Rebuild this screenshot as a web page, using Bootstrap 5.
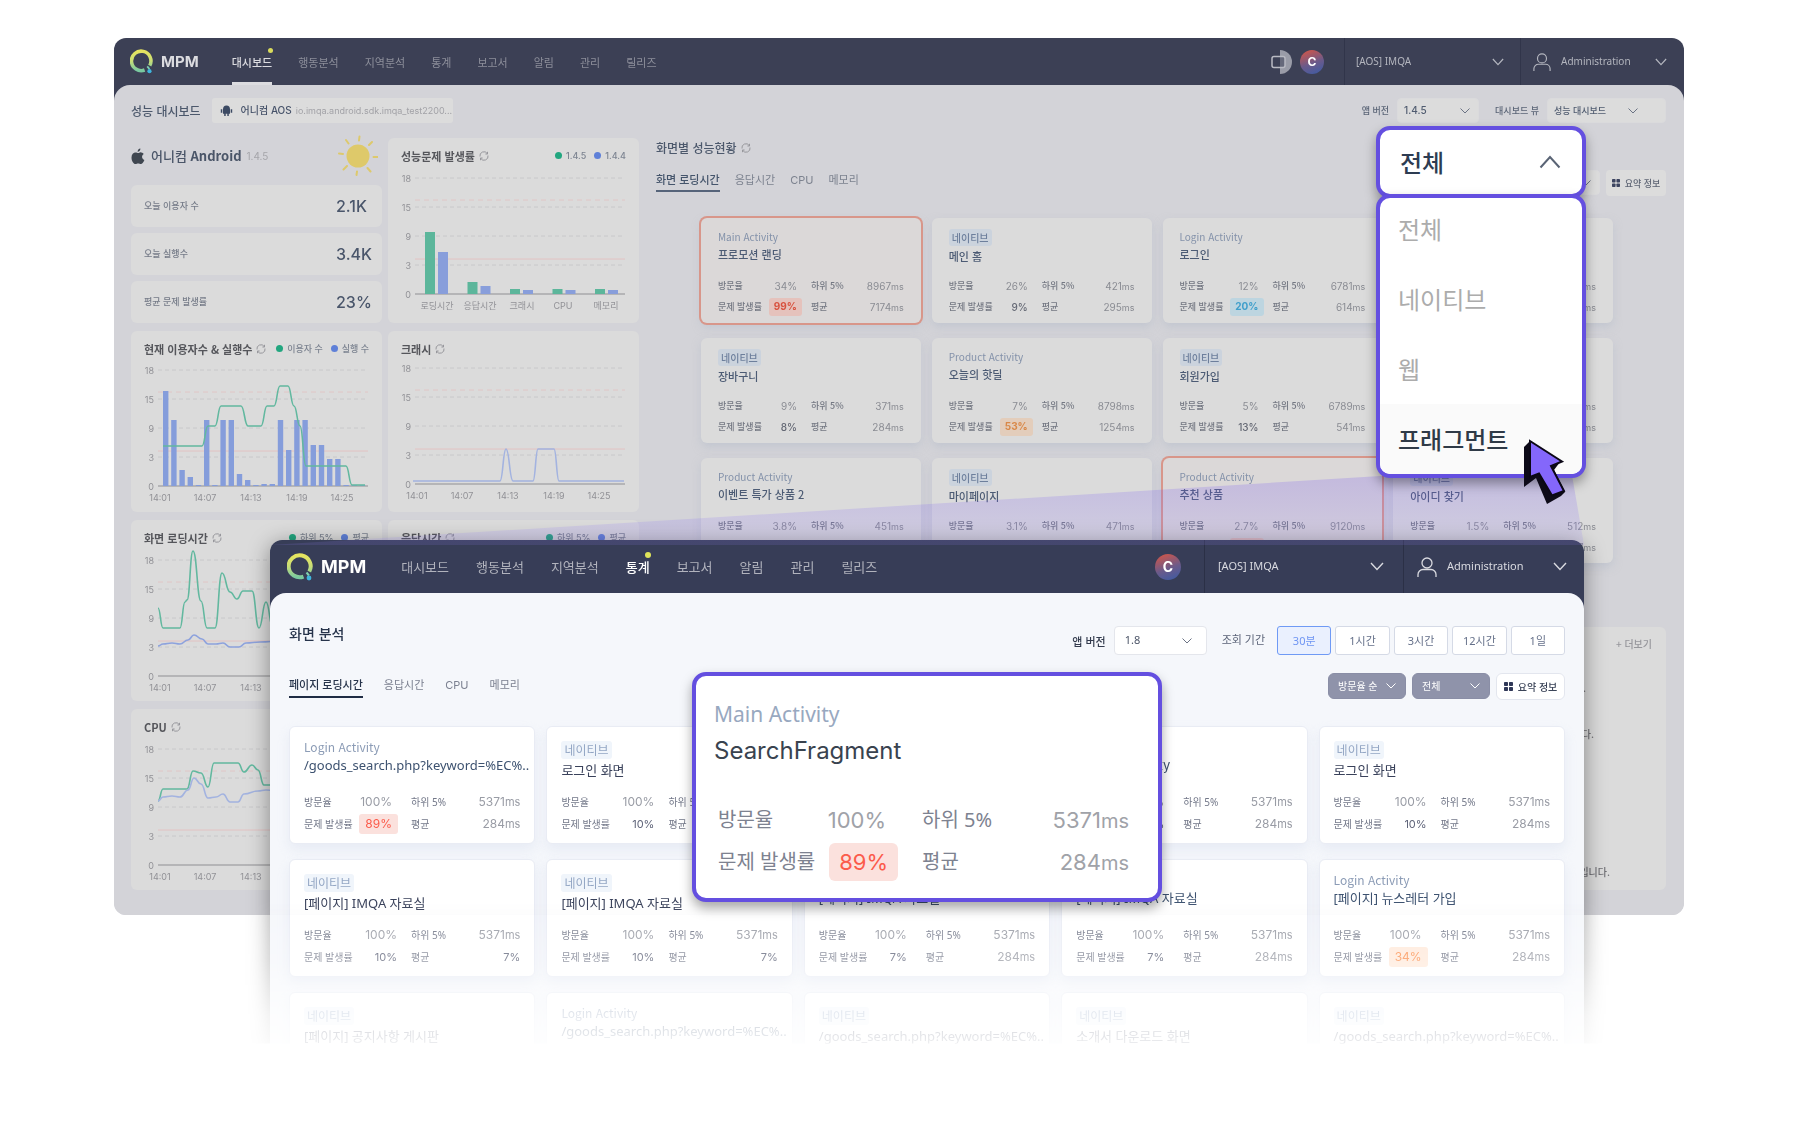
<!DOCTYPE html>
<html lang="ko">
<head>
<meta charset="utf-8">
<meta name="viewport" content="width=device-width, initial-scale=1">
<title>IMQA MPM</title>
<link href="https://cdn.jsdelivr.net/npm/bootstrap@5.3.0/dist/css/bootstrap.min.css" rel="stylesheet">
<style>
:root{--purple:#644fe0;--kr:"Noto Sans","Noto Sans CJK KR",sans-serif;--krs:"Noto Sans CJK KR","Noto Sans",sans-serif;--num:Inter,"Noto Sans CJK KR",sans-serif}
body{font-family:var(--kr);background:#fff;color:#3b4863}
.stage{position:relative;padding:38px 116px 200px 114px}
button,select,input{font-family:inherit}
a{text-decoration:none;color:inherit}
.f-num{font-family:var(--num)}

/* windows */
.win{overflow:hidden;border-radius:12px}
.win-body{border-radius:16px 16px 0 0}
.back{background:linear-gradient(#3c4055 0 140px,#d3d3d8 140px);filter:blur(.6px)}
.back .win-body{background:#d3d3d8;padding:13px 18px 25px 17px}
.topbar{height:47px;padding-left:16px;font-size:11px;color:#8d8f9b}
.topbar .brand{font:700 15px Inter,sans-serif;color:#dcdce0}
.topbar .menu{gap:26px;margin-left:33px}
.topbar .menu a{position:relative;display:flex;align-items:center;height:100%;padding-top:3px}
.topbar .menu a.on{color:#dcdce0;font-weight:500}
.topbar .menu a.on::before{content:"";position:absolute;right:-1px;top:10px;width:5px;height:5px;border-radius:50%;background:#d9db5c}
.back .menu a.on::after{content:"";position:absolute;left:0;right:0;bottom:0;height:3px;background:#dcdce0}
.avatar{width:24px;height:24px;border-radius:50%;background:linear-gradient(160deg,#c8564e 10%,#6b5a8a 55%,#3a5ba6);color:#fff;font:700 12px/24px Inter,sans-serif;text-align:center}
.seg{height:100%;border-left:1px solid #31354a;color:#b3b5be}
.back .seg{font-size:10px}
.topbar .seg-app{width:176px;padding:0 16px 0 11px;margin-left:20px}
.topbar .seg-user{width:164px;padding:0 17px 0 12px}
.seg-user span{margin-left:10px}

/* dashboard behind */
.pg-title{font:500 12px/20px var(--krs);color:#4c586c}
.pill-app{height:25px;width:241px;margin-left:11px;background:#dcdcdc;border-radius:3px;padding:0 8px;font-size:9px;color:#a2a2a7;font-family:var(--num);white-space:nowrap}
.pill-app b{font-size:10px;font-weight:500;color:#47536a}
.sel{appearance:none;border:1px solid #e4e6ec;border-radius:4px;background:#fff url("data:image/svg+xml,%3Csvg xmlns='http://www.w3.org/2000/svg' viewBox='0 0 10 6' fill='none' stroke='%236b7384'%3E%3Cpath d='M.5.5 5 5 9.500.5'/%3E%3C/svg%3E") no-repeat right 14px center/10px 6px;color:#4c5568;padding:0 10px}
.back .sel{background-color:#dcdcdc;border-color:#dadadc;height:25px;font-size:10px;padding:0 6px;font-family:var(--num);color:#4f5b6f;font-weight:500;background-position:right 8px center}
.back .sel-ver{width:82px}
.back .sel-view{width:119px;font-size:9px;background-position:right 27px center}
.sm-lab{font-size:9px;font-weight:500;color:#5b6577;font-family:var(--krs)}
.side{width:251px;flex:none}
.pane{background:#dbdbdb;border-radius:6px}
.app-row{height:36px;margin-bottom:11px}
.app-name{font:500 13px/20px var(--krs);color:#4a5568;margin:0 5px 0 6px}
.app-ver{font:10px/20px var(--num);color:#a5a5aa}
.kpi{height:42px;padding:0 11px 0 13px}
.kpi span{font-size:9px;color:#757b88;font-family:var(--krs);font-weight:500}
.kpi strong{font:500 16px Inter,sans-serif;color:#4a566b;width:35px;white-space:nowrap}
.pane-h{height:30px;padding:6px 13px 0}
.pane-h h3{font:700 11px/20px var(--krs);color:#55565b;margin:0}
.lg{font:500 9px/12px var(--num);color:#7d8491;white-space:nowrap}
.lg i{display:inline-block;width:7px;height:7px;border-radius:50%;margin-right:4px}
.g-dot{background:#22a67f}.b-dot{background:#5f80d8}
.plot{display:block;width:100%}
.plot text{font:9px Inter,"Noto Sans CJK KR",sans-serif;fill:#919196}
.tabs{gap:15px;font-size:11px;color:#7c828f;font-family:var(--num)}
.tabs a.on{font-weight:500;color:#44546b;border-bottom:2px solid #56647a}
.back .tabs a{height:22px;line-height:20px}
.screens{display:grid;grid-template-columns:repeat(4,minmax(0,1fr));gap:15px 11px;margin:22px 53px 0 45px}
.scr{display:flex;flex-direction:column;align-items:flex-start;border-radius:6px}
.back .scr{background:#dbdbdb;min-height:105px;padding:11px 17px 5px;box-shadow:0 4px 8px rgba(180,188,202,.5)}
.back .scr.alarm{background:#dbd8d8;box-shadow:0 0 0 2px #d8968a,0 4px 8px rgba(180,188,202,.5)}
.act{color:#8492aa}
.back .act{font:10px/16px var(--krs)}
.back .nm{font:500 11px/18px var(--krs);color:#4c5b74}
.nat{border-radius:3px}
.back .nat{background:#cbd3dd;color:#6d7f9c;font:500 10px/17px var(--krs);padding:0 3px;margin-bottom:1px}
.stats{display:grid;align-self:stretch;margin-top:auto;white-space:nowrap}
.stats .lb2{padding-left:14px}
.stats .v{justify-self:end;font-family:var(--num)}
.back .stats{grid-template-columns:50px 29px 1fr auto;font:500 9px/20px var(--krs);color:#747883}
.back .stats .v{font-size:10px;font-weight:400;color:#8a8c93}
.back .stats .pr{font-weight:500;color:#646874}
.back .hot{border-radius:3px;line-height:17px;padding:0 5px;margin:1px -5px 2px 0}
.back .stats .red{background:#e5c2bc;color:#d8523f;font-weight:700}
.back .stats .org{background:#e3cdbb;color:#d98848;font-weight:700}
.back .stats .blu{background:#bdd5e0;color:#3f9fcb;font-weight:700}
.news{margin-top:64px;flex:1;padding:9px 14px 8px;font:500 10px/16px var(--krs);color:#6f6f74}
.news .more{color:#97979c}
.news ul{margin-top:28px;padding-right:42px}
.news li + li{margin-top:30px}
.btn-sum{display:flex;align-items:center;justify-content:center;gap:5px;border:0;background:#dcdcdc;border-radius:4px;color:#5f6675;white-space:nowrap;padding:0}
.back .btn-sum{height:26px;width:60px;font:500 9px var(--krs)}

/* light beam */
.beam{position:absolute;left:270px;right:216px;top:476px;height:69px;clip-path:polygon(84.5% 0,99.1% 0,100% 100%,0 100%);background:linear-gradient(rgba(120,90,240,.24),rgba(150,130,250,.14));z-index:3}

/* statistics window in front */
.front-wrap{position:absolute;left:230px;right:176px;top:500px;padding:40px;z-index:2;-webkit-mask-image:linear-gradient(#000 400px,rgba(0,0,0,.72) 460px,rgba(0,0,0,.24) 515px,rgba(0,0,0,.1) 543px,transparent 544px);mask-image:linear-gradient(#000 400px,rgba(0,0,0,.72) 460px,rgba(0,0,0,.24) 515px,rgba(0,0,0,.1) 543px,transparent 544px)}
.front{background:linear-gradient(#373d57 0 120px,#f5f7fb 120px);box-shadow:0 4px 22px rgba(0,0,0,.4)}
.front .topbar{height:53px;padding-left:17px;font-size:13px;color:#b1b3bd}
.front .brand{font-size:18px;color:#fff}
.front .menu{gap:27px;margin-left:35px}
.front .topbar .menu a{padding-top:2px}
.front .topbar .menu a.on{color:#fff}
.front .topbar .menu a.on::before{top:12px;width:6px;height:6px;background:#dfe45a}
.front .avatar{width:26px;height:26px;line-height:26px;font-size:14px}
.front .seg{border-color:#2b3046;font-size:11px;color:#d9dae0}
.front .seg-app{width:199px;padding:0 19px 0 13px;margin-left:23px}
.front .seg-user{width:181px;padding:0 17px 0 13px}
.front .win-body{background:#f5f7fb;padding:33px 19px 40px}
.front h1{font:500 14px/15px var(--krs);color:#27344b;margin:0}
.lab-ver{font:500 11px var(--krs);color:#333b4d}
.lab-per{font-size:11px;color:#5b6478;margin-left:15px}
.front .sel{height:29px;width:93px;font-size:11px}
.per{display:flex;gap:4px;width:288px;margin-left:12px}
.per .btn{flex:1;height:29px;padding:0;font:11px/27px var(--kr);background:#fff;border:1px solid #d5dae6;border-radius:3px;color:#66718a}
.per .btn.active{background:#eaf0fe;border-color:#6f9af5;color:#6f95f3}
.front .tabs{gap:21px}
.front .tabs a{height:23px;line-height:21px;font-size:11px;color:#7b8090}
.front .tabs a.on{color:#27344b;border-color:#1f2c44}
.front .sel-dark{height:26px;width:78px;background-color:#8f93aa;border-color:#8a8ea6;border-radius:6px;color:#fff;font-size:10px;padding:0 9px;background-position:right 9px center;background-image:url("data:image/svg+xml,%3Csvg xmlns='http://www.w3.org/2000/svg' viewBox='0 0 10 6' fill='none' stroke='white'%3E%3Cpath d='M.5.5 5 5 9.500.5'/%3E%3C/svg%3E")}
.front .btn-sum{height:27px;width:69px;font:500 10px var(--krs);background:#fff;border:1px solid #e3e6ee;border-radius:6px;color:#3b4458}
.front .screens{grid-template-columns:repeat(5,minmax(0,1fr));gap:15px 11px;margin:26px 0 0}
.front .scr{background:#fff;min-height:118px;padding:11px 14px 8px;border:1px solid #e9ecf4;box-shadow:0 6px 12px rgba(215,222,238,.45)}
.front .act{font:12px/17px var(--krs);color:#8c9cb6}
.front .nm{font:13px/20px var(--kr);color:#39415a;white-space:nowrap}
.front .act + .nm{color:#3d5270}
.front .nat{background:#f0f5fb;color:#93a6c4;font:12px/18px var(--krs);padding:0 3px;margin:3px 0 1px}
.front .stats{grid-template-columns:58px 35px 1fr auto;font:10px/22px var(--kr);color:#737889}
.front .act ~ .stats{grid-template-columns:58px 30px 1fr auto}
.front .act ~ .stats .lb2{padding-left:19px}
.front .stats .v{font-size:12px;color:#999ca5}
.front .stats .v small{font-size:11px}
.back .v small{font-size:9px}
.front .stats .pr{font-size:11px;color:#60657a}
.front .stats .hot{border-radius:3px;font-size:12px;line-height:20px;padding:0 6px;margin:1px -6px 1px 0}
.front .stats .red{background:#fbe1dd;color:#fb5b4b}
.front .stats .org{background:#ffe9da;color:#fb8f4e}

/* magnified card and type menu */
.pop{position:absolute;background:#fff;border:4px solid var(--purple);border-radius:14px;z-index:4;box-shadow:0 6px 12px rgba(0,0,0,.35)}
.call{left:692px;top:672px;width:470px;padding:20px 29px 15px 18px}
.call .act{font:21px/36px var(--kr);color:#98a8c0}
.call .nm{font:24px/38px Inter,sans-serif;color:#39434f}
.call .stats{grid-template-columns:100px 68px 1fr auto;grid-auto-rows:42px;font:20px/42px var(--kr);color:#7d8290;margin:29px 0 0 4px}
.call .stats .lb2{padding-left:36px}
.call .stats .v{font-size:22px;color:#a0a2a8}
.call .v small{font-size:20px}
.call .stats .hot{border-radius:6px;line-height:38px;padding:0 10px;margin:2px -12px 2px 0;background:#fbe1dd;color:#fb5b4b}
.typemenu{position:absolute;right:214px;top:126px;width:210px;z-index:5;font-family:var(--krs);font-size:24px}
.typemenu .pop{position:static;display:flex;width:100%;margin:0}
.typemenu button.pop{height:72px;align-items:center;justify-content:space-between;padding:0 21px 0 20px;color:#2d3c52;font-weight:500}
.typemenu ul.pop{flex-direction:column;overflow:hidden;padding:0;margin-top:-4px;list-style:none}
.typemenu li a{display:block;height:70px;line-height:70px;padding-left:18px;color:#acacac}
.typemenu li:first-child a{height:66px;line-height:62px}
.typemenu li.hov a{background:#fafafa;color:#2f3a47;font-weight:500}
.cursor{position:absolute;right:234px;top:438px;z-index:6}
</style>
</head>
<body>
<svg width="0" height="0" class="position-absolute" aria-hidden="true">
  <defs>
    <linearGradient id="ring" x1="0" y1="0" x2="0" y2="1"><stop offset="0" stop-color="#e6e45f"/><stop offset=".5" stop-color="#c9de77"/><stop offset="1" stop-color="#79c9a0"/></linearGradient>
    <symbol id="logo" viewBox="0 0 26 28"><path d="M16.500 23.600A11 11 0 1 1 22.300 18.600" fill="none" stroke="url(#ring)" stroke-width="4"/><path d="M19.500 19.500l2.500 3" stroke="#7fd0b0" stroke-width="2"/><circle cx="22" cy="25" r="2.400" fill="#3fb4dc"/></symbol>
    <symbol id="chev" viewBox="0 0 14 9"><path d="M1 1l6 6.500L13 1" fill="none" stroke="currentColor" stroke-width="1.400"/></symbol>
    <symbol id="user" viewBox="0 0 20 20"><circle cx="10" cy="6" r="5" fill="none" stroke="currentColor" stroke-width="1.300"/><path d="M1 20v-2.500a5 5 0 0 1 5-5h8a5 5 0 0 1 5 5V20" fill="none" stroke="currentColor" stroke-width="1.300"/></symbol>
    <symbol id="tiles" viewBox="0 0 9 9"><rect width="4" height="4" rx=".8"/><rect x="5" width="4" height="4" rx=".8"/><rect y="5" width="4" height="4" rx=".8"/><rect x="5" y="5" width="4" height="4" rx=".8"/></symbol>
    <symbol id="ref" viewBox="0 0 10 10"><path d="M1 5.500A4 4 0 0 1 8.300 2.600M9 4.500A4 4 0 0 1 1.700 7.400M8.500.8v2.200H6.400M1.500 9.200V7h2.100" fill="none" stroke="#97979c" stroke-width="1"/></symbol>
  </defs>
</svg>

<main class="stage">
  <section class="win back">
    <header class="topbar d-flex align-items-center">
      <svg width="23" height="25"><use href="#logo"/></svg>
      <span class="brand ms-2">MPM</span>
      <nav class="menu d-flex h-100"><a class="on" href="#">대시보드</a><a href="#">행동분석</a><a href="#">지역분석</a><a href="#">통계</a><a href="#">보고서</a><a href="#">알림</a><a href="#">관리</a><a href="#">릴리즈</a></nav>
      <svg class="ms-auto me-2" width="22" height="24" viewBox="0 0 22 24"><path d="M10 0a12 12 0 0 1 0 24z" fill="#9a9ca8"/><rect x="2" y="6.500" width="13" height="11" rx="2" fill="#3c4055" fill-opacity=".55" stroke="#b9bac3" stroke-width="1.500"/></svg>
      <span class="avatar">C</span>
      <div class="seg seg-app d-flex align-items-center justify-content-between">[AOS] IMQA<svg width="12" height="8"><use href="#chev"/></svg></div>
      <div class="seg seg-user d-flex align-items-center"><svg width="18" height="18"><use href="#user"/></svg><span>Administration</span><svg class="ms-auto" width="12" height="8"><use href="#chev"/></svg></div>
    </header>
    <div class="win-body">
      <div class="d-flex align-items-center">
        <span class="pg-title">성능 대시보드</span>
        <div class="pill-app d-flex align-items-center gap-1"><svg class="me-1 flex-shrink-0" width="13" height="13" viewBox="0 0 13 13" fill="#3c4a63"><path d="M3 5.300a3.500 3.800 0 0 1 7 0v4.500H8.800V12H7.300V9.800H5.700V12H4.200V9.800H3zM.8 5.200h1.500v3.600H.8zM10.700 5.200h1.500v3.600h-1.500z"/></svg><b>어니컴 AOS</b><span>io.imqa.android.sdk.imqa_test2200...</span></div>
        <label class="sm-lab ms-auto" for="bv">앱 버전</label><select class="sel sel-ver ms-2" id="bv"><option>1.4.5</option></select>
        <label class="sm-lab ms-3" for="bd">대시보드 뷰</label><select class="sel sel-view ms-2" id="bd"><option>성능 대시보드</option></select>
      </div>
      <div class="d-flex" style="margin-top:15px">
        <div>
          <div class="d-flex" style="gap:6px">
            <div class="side">
              <div class="app-row d-flex align-items-center">
                <svg width="14" height="17" viewBox="0 0 14 17" fill="#3f4650"><path d="M9.300 4.300c1.400 0 2.700.7 3.400 1.800-2.500 1.600-2 4.900.7 5.900-.8 2.100-2.100 4-3.600 4-1 0-1.400-.6-2.600-.6s-1.700.6-2.700.6C2.400 16 .5 12.600.5 9.400c0-3.200 2-5 4-5 1.200 0 2 .7 2.800.7.700 0 1.300-.8 2-.8zM9.400.5c.1 1.700-1.100 3.300-2.800 3.300C6.500 2.200 7.800.7 9.400.5z"/></svg>
                <span class="app-name">어니컴 <b>Android</b></span>
                <span class="app-ver">1.4.5</span>
                <svg class="ms-auto me-1" width="40" height="42" viewBox="-20 -21 40 42" stroke="#ddc96c" stroke-width="2" stroke-linecap="round"><circle r="11.500" fill="#dec96a" stroke="none"/><path d="M1-15.500l.5-4M11-11l3-3M15.500 1h4M9.500 12l3 3.500M-1 15.500l-.5 3.500M-11 10l-3.500 3.500M-15-2l-4-.5M-9.500-12.500l-2.500-3.500"/></svg>
              </div>
              <div class="d-flex flex-column" style="gap:6px">
                <div class="pane kpi d-flex align-items-center justify-content-between"><span>오늘 이용자 수</span><strong>2.1K</strong></div>
                <div class="pane kpi d-flex align-items-center justify-content-between"><span>오늘 실행수</span><strong>3.4K</strong></div>
                <div class="pane kpi d-flex align-items-center justify-content-between"><span>평균 문제 발생률</span><strong>23%</strong></div>
              </div>
            </div>
            <div class="side pane" data-plot="rate"></div>
          </div>
          <div class="d-flex mt-2" style="gap:6px"><div class="side pane" data-plot="users"></div><div class="side pane" data-plot="crash"></div></div>
          <div class="d-flex mt-2" style="gap:6px"><div class="side pane" data-plot="load"></div><div class="side pane" data-plot="resp"></div></div>
          <div class="d-flex mt-2" style="gap:6px"><div class="side pane" data-plot="cpu"></div><div class="side pane" data-plot="mem"></div></div>
        </div>
        <div class="flex-grow-1 d-flex flex-column" style="margin-left:17px">
          <div class="d-flex align-items-center"><span class="pg-title">화면별 성능현황</span><svg class="ms-1" width="10" height="10"><use href="#ref"/></svg></div>
          <div class="d-flex justify-content-between align-items-start" style="margin-top:12px">
            <nav class="tabs d-flex"><a class="on" href="#">화면 로딩시간</a><a href="#">응답시간</a><a href="#">CPU</a><a href="#">메모리</a></nav>
            <div class="d-flex" style="gap:6px"><select class="sel sel-ver" aria-label="유형"><option>전체</option></select><button class="btn-sum" type="button"><svg width="8" height="8" fill="#3c4460"><use href="#tiles"/></svg>요약 정보</button></div>
          </div>
          <div class="screens" id="backScreens"></div>
          <div class="pane news"><div class="more text-end">+ 더보기</div>
            <ul class="list-unstyled text-end mb-0"><li class="me-4">응답시간이 증가했습니다.</li><li class="me-3">로딩시간이 지연되고 있습니다.</li><li class="me-5">CPU 사용률이 정상입니다.</li><li class="me-5">메모리 사용률이 정상입니다.</li><li>오늘의 크래시는 0건입니다.</li></ul></div>
        </div>
      </div>
    </div>
  </section>

  <div class="front-wrap">
    <section class="win front">
      <header class="topbar d-flex align-items-center">
        <svg width="26" height="28"><use href="#logo"/></svg>
        <span class="brand ms-2">MPM</span>
        <nav class="menu d-flex h-100"><a href="#">대시보드</a><a href="#">행동분석</a><a href="#">지역분석</a><a class="on" href="#">통계</a><a href="#">보고서</a><a href="#">알림</a><a href="#">관리</a><a href="#">릴리즈</a></nav>
        <span class="avatar ms-auto">C</span>
        <div class="seg seg-app d-flex align-items-center justify-content-between">[AOS] IMQA<svg width="14" height="9"><use href="#chev"/></svg></div>
        <div class="seg seg-user d-flex align-items-center"><svg width="20" height="20"><use href="#user"/></svg><span>Administration</span><svg class="ms-auto" width="14" height="9"><use href="#chev"/></svg></div>
      </header>
      <div class="win-body">
        <div class="d-flex align-items-start">
          <h1>화면 분석</h1>
          <div class="d-flex align-items-center ms-auto">
            <label for="fv" class="lab-ver me-2">앱 버전</label><select id="fv" class="sel"><option>1.8</option></select>
            <span class="lab-per">조회 기간</span>
            <div class="per"><button class="btn active" type="button">30분</button><button class="btn" type="button">1시간</button><button class="btn" type="button">3시간</button><button class="btn" type="button">12시간</button><button class="btn" type="button">1일</button></div>
          </div>
        </div>
        <div class="d-flex justify-content-between align-items-center" style="margin-top:18px">
          <nav class="tabs d-flex"><a class="on" href="#">페이지 로딩시간</a><a href="#">응답시간</a><a href="#">CPU</a><a href="#">메모리</a></nav>
          <div class="d-flex" style="gap:6px"><select class="sel sel-dark" aria-label="정렬"><option>방문율 순</option></select><select class="sel sel-dark" aria-label="유형"><option>전체</option></select><button class="btn-sum" type="button"><svg width="9" height="9" fill="#2f3757"><use href="#tiles"/></svg>요약 정보</button></div>
        </div>
        <div class="screens" id="frontScreens"></div>
      </div>
    </section>
  </div>

  <div class="beam"></div>

  <article class="pop call">
    <div class="act">Main Activity</div>
    <div class="nm">SearchFragment</div>
    <div class="stats"><span>방문율</span><span class="v">100%</span><span class="lb2">하위 5%</span><span class="v">5371<small>ms</small></span><span>문제 발생률</span><span class="v hot">89%</span><span class="lb2">평균</span><span class="v">284<small>ms</small></span></div>
  </article>

  <div class="typemenu">
    <button class="pop" type="button" aria-expanded="true">전체<svg width="22" height="14" viewBox="0 0 22 14"><path d="M1.500 12.500L11 2l9.500 10.500" fill="none" stroke="#5a6475" stroke-width="2"/></svg></button>
    <ul class="pop"><li><a href="#">전체</a></li><li><a href="#">네이티브</a></li><li><a href="#">웹</a></li><li class="hov"><a href="#">프래그먼트</a></li></ul>
  </div>
  <svg class="cursor" width="44" height="68" viewBox="0 0 44 68"><path d="M8 3L2 9v40l12-9 11 26 14-8 4-4-11-22 6-8z" fill="#0d0a18"/><path d="M8 3l32 20.500-11 4.500 13 25-12 4.500-13-22L8 39z" fill="#8467fb" stroke="#0b0716" stroke-width="2"/></svg>
</main>

<script src="https://cdn.jsdelivr.net/npm/bootstrap@5.3.0/dist/js/bootstrap.bundle.min.js"></script>
<script>
// Screen cards: [activity label or '' for native, name, visit, problem, tone, p95, mean]
const card = ([act, nm, visit, prob, tone, p95, mean, alarm]) => {
  const t = s => s.endsWith('ms') ? s.slice(0, -2) + '<small>ms</small>' : s;
  return `<article class="scr${alarm ? ' alarm' : ''}">${act ? `<span class="act">${act}</span>` : '<span class="nat">네이티브</span>'}
  <span class="nm">${nm}</span>
  <div class="stats"><span>방문율</span><span class="v">${visit}</span><span class="lb2">하위 5%</span><span class="v">${t(p95)}</span>
  <span>문제 발생률</span><span class="v pr ${tone ? 'hot ' + tone : ''}">${prob}</span><span class="lb2">평균</span><span class="v${mean.endsWith('%') ? ' pr' : ''}">${t(mean)}</span></div></article>`;
};
document.getElementById('backScreens').innerHTML = [
  ['Main Activity','프로모션 랜딩','34%','99%','red','8967ms','7174ms',1],
  ['','메인 홈','26%','9%','','421ms','295ms'],
  ['Login Activity','로그인','12%','20%','blu','6781ms','614ms'],
  ['','검색','10%','8%','','512ms','287ms'],
  ['','장바구니','9%','8%','','371ms','284ms'],
  ['Product Activity','오늘의 핫딜','7%','53%','org','8798ms','1254ms'],
  ['','회원가입','5%','13%','','6789ms','541ms'],
  ['','상품 목록','4%','9%','','471ms','287ms'],
  ['Product Activity','이벤트 특가 상품 2','3.8%','9%','','451ms','284ms'],
  ['','마이페이지','3.1%','7%','','471ms','284ms'],
  ['Product Activity','추천 상품','2.7%','89%','red','9120ms','7174ms',1],
  ['','아이디 찾기','1.5%','7%','','512ms','287ms']
].map(card).join('');
const url = '/goods_search.php?keyword=%EC%..', L = 'Login Activity', ref = '[페이지] IMQA 자료실';
document.getElementById('frontScreens').innerHTML = [
  [L,url,'100%','89%','red','5371ms','284ms'],
  ['','로그인 화면','100%','10%','','5371ms','284ms'],
  [L,'MainActivity','100%','10%','','5371ms','284ms'],
  [L,'<span class="f-num">ProductActivity</span>','100%','10%','','5371ms','284ms'],
  ['','로그인 화면','100%','10%','','5371ms','284ms'],
  ['',ref,'100%','10%','','5371ms','7%'],
  ['',ref,'100%','10%','','5371ms','7%'],
  [L,ref,'100%','7%','','5371ms','284ms'],
  [L,ref,'100%','7%','','5371ms','284ms'],
  [L,'[페이지] 뉴스레터 가입','100%','34%','org','5371ms','284ms'],
  ['','[페이지] 공지사항 게시판','100%','10%','','5371ms','284ms'],
  [L,url,'100%','10%','','5371ms','284ms'],
  ['',url,'100%','10%','','5371ms','284ms'],
  ['','소개서 다운로드 화면','100%','10%','','5371ms','284ms'],
  ['',url,'100%','10%','','5371ms','284ms']
].map(card).join('');

// Charts
const G = '#62b89f', B = '#8da2dd', times = ['14:01','14:07','14:13','14:19','14:25'];
const line = (pts, c) => {
  const p = pts.split(' ').map(s => s.split(',').map(Number));
  let d = `M${p[0]}`;
  for (let i = 1; i < p.length; i++) { const m = (p[i-1][0] + p[i][0]) / 2; d += `C${m},${p[i-1][1]} ${m},${p[i][1]} ${p[i]}`; }
  return `<path d="${d}" fill="none" stroke="${c}" stroke-width="1.600"/>`;
};
const plots = {
  rate: {t:'성능문제 발생률', lg:['1.4.5','1.4.4'], y:10, h:155, lx:[49,92,134,175,218], lab:['로딩시간','응답시간','크래시','CPU','메모리'],
    body: [[62,42],[12,8],[5,4],[5,4],[5,4]].map(([a,b],i)=>`<rect x="${37+42.5*i}" y="${126-a}" width="10" height="${a}" fill="#5cb69b"/><rect x="${50+42.5*i}" y="${126-b}" width="10" height="${b}" fill="#889edb"/>`).join('')},
  users: {t:'현재 이용자수 &amp; 실행수', lg:['이용자 수','실행 수'], y:9,
    body: [95,66,16,9,1,66,1,66,66,12,6,1,2,2,66,36,66,66,41,41,27,27,1,1,1].map((v,i)=>`<rect x="${32+8.2*i}" y="${125-v}" width="5.400" height="${v}" fill="#859ddb"/>`).join('')
      + line('32,85 71,85 77,65 84,65 90,45 110,45 117,65 130,65 136,45 143,45 149,25 157,25 163,45 169,65 175,105 215,105 221,124 234,124', G)},
  crash: {t:'크래시', y:7, body: line('25,120 112,120 118,88 125,120 145,120 150,88 166,88 171,120 236,120', '#a3b3e0')},
  load: {t:'화면 로딩시간', lg:['하위 5%','평균'], y:10,
    body: line('27,58 32,78 49,78 54,52 56,50 62,1 70,51 76,78 84,78 91,23 99,42 106,49 112,41 121,41 128,78 135,52 142,78 150,60 160,78', G)
      + line('27,96 32,94 41,93 49,94 57,90 63,85 71,89 77,94 85,94 92,93 99,97 108,97 115,93 129,92 150,91', B)},
  resp: {t:'응답시간', lg:['하위 5%','평균'], y:10, body:''},
  cpu: {t:'CPU', y:10,
    body: line('27,62 32,50 56,50 62,32 70,34 77,48 83,24 107,24 113,33 121,26 127,31 133,46 150,46', G)
      + line('27,62 32,58 41,57 49,58 57,51 63,39 70,45 77,59 85,58 92,55 99,63 107,63 113,55 127,52 135,51 150,52', '#a3b3e0')},
  mem: {t:'메모리', y:10, body:''}
};
document.querySelectorAll('[data-plot]').forEach(el => {
  const p = plots[el.dataset.plot], h = p.h || 151, lab = p.lab || times, lx = p.lx || [29,74,120,166,211];
  const grid = ['18','15','9','3','0'].map((n,i) => { const y = p.y + 29*i;
    return `<text x="23" y="${y+4}" text-anchor="end">${n}</text><path d="M27 ${y}H237" stroke="${i==4?'#a9a9ab':'#c8c8ca'}" stroke-width="${i==4?1.5:1}" ${i==4?'':'stroke-dasharray="4 3"'}/>`; }).join('');
  el.innerHTML = `<div class="pane-h d-flex align-items-center"><h3>${p.t}</h3><svg class="ms-1" width="10" height="10"><use href="#ref"/></svg>
    ${p.lg ? `<span class="lg ms-auto"><i class="g-dot"></i>${p.lg[0]}</span><span class="lg ms-2"><i class="b-dot"></i>${p.lg[1]}</span>` : ''}</div>
    <svg class="plot" viewBox="0 0 251 ${h}">${grid}<path d="M27 ${p.y+22}H237" stroke="#e0c6c6" stroke-dasharray="5 4"/><path d="M27 ${p.y+81}H237" stroke="#e2c2c2"/>${p.body}
    ${lab.map((s,i)=>`<text x="${lx[i]}" y="${p.y+131}" text-anchor="middle">${s}</text>`).join('')}</svg>`;
});
</script>
</body>
</html>
